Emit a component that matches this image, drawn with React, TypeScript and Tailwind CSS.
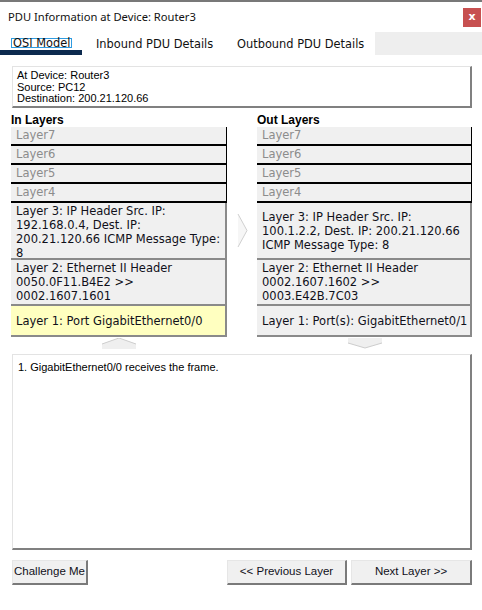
import React from "react";

const ui = { fontFamily: '"Liberation Sans", Arial, sans-serif' };
const verd = { fontFamily: '"DejaVu Sans", Verdana, sans-serif' };

function GreyLayer({ label }: { label: string }) {
  return (
    <div
      className="h-[19px] flex items-center pl-[5px] bg-[#f0f0f0] border-r border-b-2 border-black text-[11.5px] text-[#8c8c8c] leading-none"
      style={verd}
    >
      {label}
    </div>
  );
}

function InfoLayer({
  lines,
  h,
  yellow,
  center,
}: {
  lines: string[];
  h: string;
  yellow?: boolean;
  center?: boolean;
}) {
  return (
    <div
      className={`${h} flex flex-col ${center ? "justify-center" : "justify-start pt-[1px]"} pl-[5px] border-r-2 border-b-2 border-[#8a8a8a] text-[11.5px] leading-[14px] text-[#10101a] ${
        yellow ? "bg-[#ffffc0]" : "bg-[#f0f0f0]"
      }`}
      style={verd}
    >
      {lines.map((l) => (
        <div key={l} className="whitespace-nowrap">
          {l}
        </div>
      ))}
    </div>
  );
}

function UpChevron() {
  return (
    <svg width="34" height="11" viewBox="0 0 34 11">
      <path d="M0 6 L17 0 L34 6 L34 11 L0 11 Z" fill="#efefef" />
      <path d="M0 6 L17 0 L34 6" fill="none" stroke="#cdcdcd" strokeWidth="1" />
    </svg>
  );
}

function DownChevron() {
  return (
    <svg width="34" height="11" viewBox="0 0 34 11">
      <path d="M0 0 L34 0 L34 5 L17 10 L0 5 Z" fill="#efefef" />
      <path d="M0 5 L17 10 L34 5" fill="none" stroke="#cdcdcd" strokeWidth="1" />
    </svg>
  );
}

function Btn({ label, w }: { label: string; w: string }) {
  return (
    <button
      className={`${w} h-[25px] bg-[#f0f0f0] border-l border-t border-[#e6e6e6] border-r-2 border-b-2 border-r-[#7a7a7a] border-b-[#7a7a7a] text-[11.5px] text-[#10101a] flex items-center justify-center whitespace-nowrap px-0`}
      style={ui}
    >
      {label}
    </button>
  );
}

export default function App() {
  return (
    <div className="w-[482px] h-[610px] bg-white border-t-2 border-[#787878] flex flex-col">
      {/* title bar */}
      <div className="h-[30px] flex items-center justify-between pl-2 pr-[1px]">
        <span className="text-[11.2px] text-[#111]" style={{ fontFamily: '"Noto Sans", sans-serif' }}>
          PDU Information at Device: Router3
        </span>
        <div
          className="w-[18px] h-[19px] bg-[#c75050] text-white text-[11px] font-bold flex items-center justify-center"
          style={verd}
        >
          x
        </div>
      </div>

      {/* tabs */}
      <div className="h-[23px] flex text-[11.4px] text-[#111]" style={verd}>
        <div className="w-[82px] flex flex-col">
          <div className="flex-1 flex items-start pt-[6px] pl-[11px]">
            <span className="border border-[#2f9be0] leading-[8px] h-[10px] px-[1px]">OSI Model</span>
          </div>
          <div className="h-[5px] bg-[#0c2a4e]" />
        </div>
        <div className="pl-[14px] pt-[4px] w-[141px]">Inbound PDU Details</div>
        <div className="pl-[14px] pt-[4px] w-[152px]">Outbound PDU Details</div>
        <div className="flex-1 bg-[#eeeeee]" />
      </div>

      {/* info box */}
      <div
        className="mt-[11px] ml-[12px] w-[460px] h-[42px] border-l border-t border-[#e3e3e3] border-r-2 border-b-2 border-r-[#808080] border-b-[#808080] pl-[4px] pt-[3px] text-[11px] leading-[11.5px] text-black"
        style={ui}
      >
        <div>At Device: Router3</div>
        <div>Source: PC12</div>
        <div>Destination: 200.21.120.66</div>
      </div>

      {/* columns */}
      <div className="flex mt-[5px] ml-[11px]">
        <div className="w-[216px] flex flex-col">
          <div className="text-[12px] font-bold text-black leading-[14px]" style={ui}>
            In Layers
          </div>
          <GreyLayer label="Layer7" />
          <GreyLayer label="Layer6" />
          <GreyLayer label="Layer5" />
          <GreyLayer label="Layer4" />
          <InfoLayer
            h="h-[57px]"
            lines={[
              "Layer 3: IP Header Src. IP:",
              "192.168.0.4, Dest. IP:",
              "200.21.120.66 ICMP Message Type:",
              "8",
            ]}
          />
          <InfoLayer
            h="h-[46px]"
            lines={["Layer 2: Ethernet II Header", "0050.0F11.B4E2 >>", "0002.1607.1601"]}
          />
          <InfoLayer h="h-[31px]" yellow center lines={["Layer 1: Port GigabitEthernet0/0"]} />
          <div className="flex justify-center pt-[1px]">
            <UpChevron />
          </div>
        </div>

        <div className="w-[30px] flex justify-center pt-[101px]">
          <svg width="11" height="33" viewBox="0 0 11 33">
            <path d="M1 0 L10 16.5 L1 33 Z" fill="#f6f6f6" />
            <path d="M1 0 L10 16.5 L1 33" fill="none" stroke="#cfcfcf" strokeWidth="1" />
          </svg>
        </div>

        <div className="w-[215px] flex flex-col">
          <div className="text-[12px] font-bold text-black leading-[14px]" style={ui}>
            Out Layers
          </div>
          <GreyLayer label="Layer7" />
          <GreyLayer label="Layer6" />
          <GreyLayer label="Layer5" />
          <GreyLayer label="Layer4" />
          <InfoLayer
            h="h-[57px]"
            center
            lines={[
              "Layer 3: IP Header Src. IP:",
              "100.1.2.2, Dest. IP: 200.21.120.66",
              "ICMP Message Type: 8",
            ]}
          />
          <InfoLayer
            h="h-[46px]"
            lines={["Layer 2: Ethernet II Header", "0002.1607.1602 >>", "0003.E42B.7C03"]}
          />
          <InfoLayer h="h-[31px]" center lines={["Layer 1: Port(s): GigabitEthernet0/1"]} />
          <div className="flex justify-center pt-[1px]">
            <DownChevron />
          </div>
        </div>
      </div>

      {/* message box */}
      <div
        className="mt-[5px] ml-[12px] w-[460px] h-[196px] border-l border-t border-[#e3e3e3] border-r-2 border-b-2 border-r-[#808080] border-b-[#808080] pl-[5px] pt-[4px] text-[11px] text-black"
        style={ui}
      >
        1. GigabitEthernet0/0 receives the frame.
      </div>

      {/* buttons */}
      <div className="mt-[10px] ml-[12px] w-[460px] flex">
        <Btn label="Challenge Me" w="w-[76px]" />
        <div className="flex-1" />
        <Btn label="<< Previous Layer" w="w-[120px]" />
        <div className="w-[4px]" />
        <Btn label="Next Layer >>" w="w-[121px]" />
      </div>
    </div>
  );
}
